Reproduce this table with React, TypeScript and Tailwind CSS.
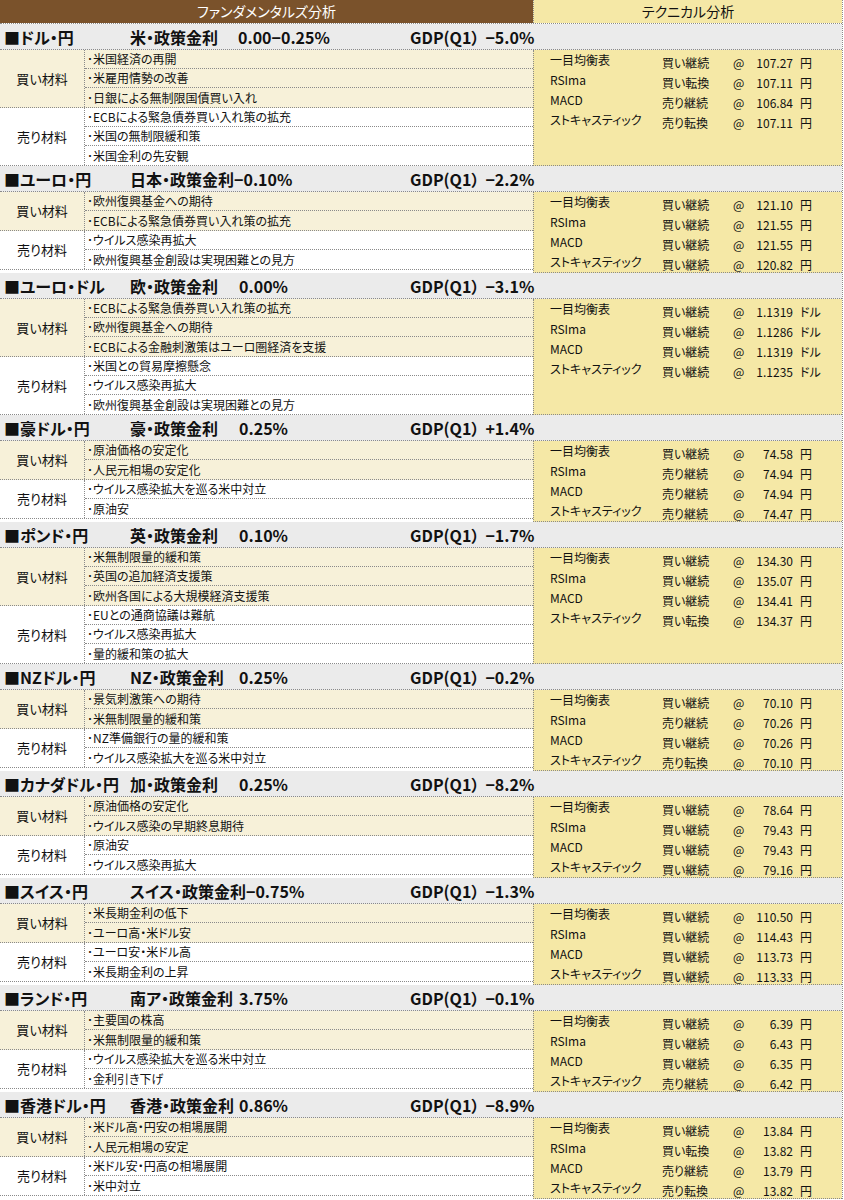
import React from 'react';

type Tech = { signal: string; value: string };

interface Section {
  pair: string;
  policy: string;
  rate: string;
  wideRate?: boolean;
  gdp: string;
  buy: string[];
  sell: string[];
  tech: Tech[];
  unit: string;
}

const techNames = ['一目均衡表', 'RSIma', 'MACD', 'ストキャスティック'];

const sections: Section[] = [
  {
    pair: 'ドル・円', policy: '米・政策金利', rate: '0.00−0.25%', wideRate: true, gdp: '−5.0%',
    buy: ['米国経済の再開', '米雇用情勢の改善', '日銀による無制限国債買い入れ'],
    sell: ['ECBによる緊急債券買い入れ策の拡充', '米国の無制限緩和策', '米国金利の先安観'],
    tech: [
      { signal: '買い継続', value: '107.27' },
      { signal: '買い転換', value: '107.11' },
      { signal: '売り継続', value: '106.84' },
      { signal: '売り転換', value: '107.11' },
    ],
    unit: '円',
  },
  {
    pair: 'ユーロ・円', policy: '日本・政策金利', rate: '−0.10%', gdp: '−2.2%',
    buy: ['欧州復興基金への期待', 'ECBによる緊急債券買い入れ策の拡充'],
    sell: ['ウイルス感染再拡大', '欧州復興基金創設は実現困難との見方'],
    tech: [
      { signal: '買い継続', value: '121.10' },
      { signal: '買い継続', value: '121.55' },
      { signal: '買い継続', value: '121.55' },
      { signal: '買い継続', value: '120.82' },
    ],
    unit: '円',
  },
  {
    pair: 'ユーロ・ドル', policy: '欧・政策金利', rate: '0.00%', gdp: '−3.1%',
    buy: ['ECBによる緊急債券買い入れ策の拡充', '欧州復興基金への期待', 'ECBによる金融刺激策はユーロ圏経済を支援'],
    sell: ['米国との貿易摩擦懸念', 'ウイルス感染再拡大', '欧州復興基金創設は実現困難との見方'],
    tech: [
      { signal: '買い継続', value: '1.1319' },
      { signal: '買い継続', value: '1.1286' },
      { signal: '買い継続', value: '1.1319' },
      { signal: '買い継続', value: '1.1235' },
    ],
    unit: 'ドル',
  },
  {
    pair: '豪ドル・円', policy: '豪・政策金利', rate: '0.25%', gdp: '+1.4%',
    buy: ['原油価格の安定化', '人民元相場の安定化'],
    sell: ['ウイルス感染拡大を巡る米中対立', '原油安'],
    tech: [
      { signal: '買い継続', value: '74.58' },
      { signal: '売り継続', value: '74.94' },
      { signal: '売り継続', value: '74.94' },
      { signal: '売り継続', value: '74.47' },
    ],
    unit: '円',
  },
  {
    pair: 'ポンド・円', policy: '英・政策金利', rate: '0.10%', gdp: '−1.7%',
    buy: ['米無制限量的緩和策', '英国の追加経済支援策', '欧州各国による大規模経済支援策'],
    sell: ['EUとの通商協議は難航', 'ウイルス感染再拡大', '量的緩和策の拡大'],
    tech: [
      { signal: '買い継続', value: '134.30' },
      { signal: '買い継続', value: '135.07' },
      { signal: '買い継続', value: '134.41' },
      { signal: '買い転換', value: '134.37' },
    ],
    unit: '円',
  },
  {
    pair: 'NZドル・円', policy: 'NZ・政策金利', rate: '0.25%', gdp: '−0.2%',
    buy: ['景気刺激策への期待', '米無制限量的緩和策'],
    sell: ['NZ準備銀行の量的緩和策', 'ウイルス感染拡大を巡る米中対立'],
    tech: [
      { signal: '買い継続', value: '70.10' },
      { signal: '売り継続', value: '70.26' },
      { signal: '買い継続', value: '70.26' },
      { signal: '売り転換', value: '70.10' },
    ],
    unit: '円',
  },
  {
    pair: 'カナダドル・円', policy: '加・政策金利', rate: '0.25%', gdp: '−8.2%',
    buy: ['原油価格の安定化', 'ウイルス感染の早期終息期待'],
    sell: ['原油安', 'ウイルス感染再拡大'],
    tech: [
      { signal: '買い継続', value: '78.64' },
      { signal: '買い継続', value: '79.43' },
      { signal: '買い継続', value: '79.43' },
      { signal: '買い継続', value: '79.16' },
    ],
    unit: '円',
  },
  {
    pair: 'スイス・円', policy: 'スイス・政策金利', rate: '−0.75%', gdp: '−1.3%',
    buy: ['米長期金利の低下', 'ユーロ高・米ドル安'],
    sell: ['ユーロ安・米ドル高', '米長期金利の上昇'],
    tech: [
      { signal: '買い継続', value: '110.50' },
      { signal: '買い継続', value: '114.43' },
      { signal: '買い継続', value: '113.73' },
      { signal: '買い継続', value: '113.33' },
    ],
    unit: '円',
  },
  {
    pair: 'ランド・円', policy: '南ア・政策金利', rate: '3.75%', gdp: '−0.1%',
    buy: ['主要国の株高', '米無制限量的緩和策'],
    sell: ['ウイルス感染拡大を巡る米中対立', '金利引き下げ'],
    tech: [
      { signal: '買い継続', value: '6.39' },
      { signal: '買い継続', value: '6.43' },
      { signal: '買い継続', value: '6.35' },
      { signal: '売り継続', value: '6.42' },
    ],
    unit: '円',
  },
  {
    pair: '香港ドル・円', policy: '香港・政策金利', rate: '0.86%', gdp: '−8.9%',
    buy: ['米ドル高・円安の相場展開', '人民元相場の安定'],
    sell: ['米ドル安・円高の相場展開', '米中対立'],
    tech: [
      { signal: '買い継続', value: '13.84' },
      { signal: '買い転換', value: '13.82' },
      { signal: '売り継続', value: '13.79' },
      { signal: '売り転換', value: '13.82' },
    ],
    unit: '円',
  },
];

const Group = ({ label, items, bg }: { label: string; items: string[]; bg: string }) => (
  <div className={`flex border-b border-dotted border-[#8a8a8a] ${bg}`}>
    <div className="flex w-[85px] shrink-0 items-center justify-center border-r border-dotted border-[#8a8a8a] text-[13px]">
      {label}
    </div>
    <div className="flex-1">
      {items.map((item, i) => (
        <div
          key={i}
          className={`flex h-[19px] items-center whitespace-nowrap pl-[2px] text-[12px] ${i < items.length - 1 ? 'border-b border-dotted border-[#8a8a8a]' : ''}`}
        >
          ･{item}
        </div>
      ))}
    </div>
  </div>
);

const SectionBlock = ({ s }: { s: Section }) => (
  <div>
    <div className="flex h-[26px] items-center whitespace-nowrap border-b border-dotted border-[#8a8a8a] bg-[#ebebeb] text-[16px] font-bold">
      <div className="w-[130px] shrink-0 pl-[4px]">■{s.pair}</div>
      <div className="flex w-[158px] shrink-0">
        <span>{s.policy}</span>
        <span className={s.wideRate ? 'ml-[20px]' : 'ml-auto'}>{s.rate}</span>
      </div>
      <div className="ml-[122px]">
        GDP(Q1）<span className="ml-[6px]">{s.gdp}</span>
      </div>
    </div>
    <div className="flex">
      <div className="w-[533px] shrink-0">
        <Group label="買い材料" items={s.buy} bg="bg-[#f7f1d9]" />
        <Group label="売り材料" items={s.sell} bg="bg-white" />
      </div>
      <div className="flex-1 border-b border-l border-dotted border-[#8a8a8a] bg-[#f5e8a6] pl-[16px] text-[12px]">
        {s.tech.map((t, i) => (
          <div key={i} className="flex h-[20px] whitespace-nowrap">
            <div className="w-[112px] pt-[1px]">{techNames[i]}</div>
            <div className="w-[71px] pt-[4px]">{t.signal}</div>
            <div className="w-[18px] pt-[4px]">@</div>
            <div className="w-[42px] pt-[4px] text-right">{t.value}</div>
            <div className="pl-[7px] pt-[4px]">{s.unit}</div>
          </div>
        ))}
      </div>
    </div>
  </div>
);

export default function App() {
  return (
    <div className="min-h-[1200px] bg-white font-['Noto_Sans_CJK_JP',sans-serif] text-[#111] [font-feature-settings:'palt']">
      <div className="w-[843px] border-r border-dotted border-[#8a8a8a]">
        <div className="flex h-[24px] border-b border-dotted border-[#8a8a8a] text-[14px]">
          <div className="flex w-[533px] shrink-0 items-center justify-center bg-[#7a522b] text-white">
            ファンダメンタルズ分析
          </div>
          <div className="flex flex-1 items-center justify-center border-l border-dotted border-[#8a8a8a] bg-[#f5e8a6]">
            テクニカル分析
          </div>
        </div>
        {sections.map((s, i) => (
          <SectionBlock key={i} s={s} />
        ))}
      </div>
    </div>
  );
}
